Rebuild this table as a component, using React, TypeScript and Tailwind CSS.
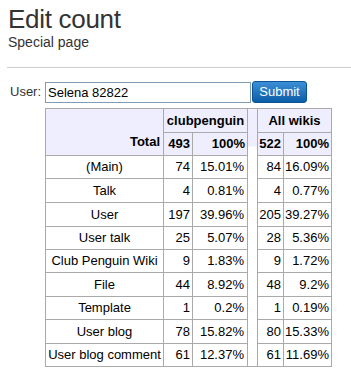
import React from 'react'

type Row = { ns: string; c1: number; p1: string; c2: number; p2: string; h: number }

const rows: Row[] = [
  { ns: '(Main)', c1: 74, p1: '15.01%', c2: 84, p2: '16.09%', h: 23 },
  { ns: 'Talk', c1: 4, p1: '0.81%', c2: 4, p2: '0.77%', h: 24 },
  { ns: 'User', c1: 197, p1: '39.96%', c2: 205, p2: '39.27%', h: 24 },
  { ns: 'User talk', c1: 25, p1: '5.07%', c2: 28, p2: '5.36%', h: 23 },
  { ns: 'Club Penguin Wiki', c1: 9, p1: '1.83%', c2: 9, p2: '1.72%', h: 23 },
  { ns: 'File', c1: 44, p1: '8.92%', c2: 48, p2: '9.2%', h: 24 },
  { ns: 'Template', c1: 1, p1: '0.2%', c2: 1, p2: '0.19%', h: 23 },
  { ns: 'User blog', c1: 78, p1: '15.82%', c2: 80, p2: '15.33%', h: 24 },
  { ns: 'User blog comment', c1: 61, p1: '12.37%', c2: 61, p2: '11.69%', h: 23 },
]

const cell = 'border border-[#aaaaaa] p-0 pr-[2px] text-right'

export default function App() {
  return (
    <div className="w-[351px] h-[383px] bg-white text-[#333333] font-['Liberation_Sans',Arial,sans-serif] overflow-hidden">
      <div className="pl-2 pt-[4px]">
        <div className="h-[30px] text-[26px] leading-[30px] tracking-[-0.3px]">Edit count</div>
        <div className="h-[17px] text-[14px] leading-[17px]">Special page</div>
      </div>
      <div className="mt-[16px] ml-[7px] h-px bg-[#cccccc]" />

      <div className="mt-[13px] flex items-center text-[13px]">
        <span className="w-[45px] pl-[10px] text-[#333333]">User:</span>
        <input
          className="w-[206px] h-[21px] border border-[#7f9db9] px-[2px] text-[13px] text-black outline-none"
          defaultValue="Selena 82822"
        />
        <button className="ml-[1px] h-[22px] w-[55px] rounded-[3px] border border-[#0b5596] bg-gradient-to-b from-[#3b8fd6] to-[#0a5da8] text-[13px] leading-[20px] text-white">
          Submit
        </button>
      </div>

      <table className="mt-[5px] ml-[45px] border-collapse table-fixed text-[13px] text-black w-[286px]">
        <colgroup>
          <col className="w-[118px]" />
          <col className="w-[29px]" />
          <col className="w-[55px]" />
          <col className="w-[10px]" />
          <col className="w-[26px]" />
          <col className="w-[48px]" />
        </colgroup>
        <thead className="bg-[#eeeeff] font-bold">
          <tr className="h-[24px]">
            <th rowSpan={2} className={`${cell} align-bottom pb-[4px] pr-[3px]`}>Total</th>
            <th colSpan={2} className="border border-[#aaaaaa] p-0 text-center">clubpenguin</th>
            <th rowSpan={2} className="border-t border-[#aaaaaa] p-0 bg-[linear-gradient(#eeeeff_0,#eeeeff_37px,#ffffff_37px)]" />
            <th colSpan={2} className="border border-[#aaaaaa] p-0 text-center">All wikis</th>
          </tr>
          <tr className="h-[23px]">
            <th className={cell}>493</th>
            <th className={cell}>100%</th>
            <th className={cell}>522</th>
            <th className={cell}>100%</th>
          </tr>
        </thead>
        <tbody>
          {rows.map((r, i) => (
            <tr key={r.ns} style={{ height: r.h }}>
              <td className="border border-[#aaaaaa] p-0 text-center whitespace-nowrap">{r.ns}</td>
              <td className={cell}>{r.c1}</td>
              <td className={`${cell} pr-[3px]`}>{r.p1}</td>
              <td className={i === rows.length - 1 ? 'border-b border-[#aaaaaa] p-0' : 'p-0'} />
              <td className={cell}>{r.c2}</td>
              <td className={cell}>{r.p2}</td>
            </tr>
          ))}
        </tbody>
      </table>
    </div>
  )
}
